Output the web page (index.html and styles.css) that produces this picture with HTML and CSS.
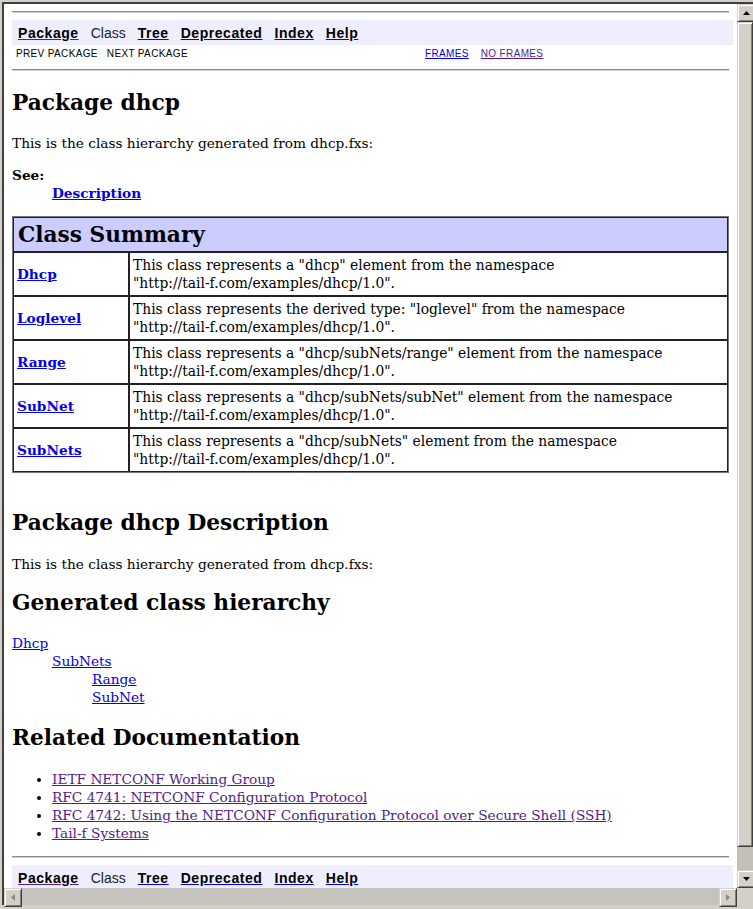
FILE: index.html
```html
<!DOCTYPE html>
<html lang="en">
<head>
    <meta charset="UTF-8">
    <title>dhcp</title>
    <link rel="stylesheet" href="styles.css">
</head>
<body>
<div class="window">
<div class="frame">
    <div class="viewport">
        <div class="page">
            <hr class="rule">
            <div class="navbar">
                <a class="nav-link visited" href="#">Package</a>
                <span class="nav-plain">Class</span>
                <a class="nav-link" href="#">Tree</a>
                <a class="nav-link" href="#">Deprecated</a>
                <a class="nav-link" href="#">Index</a>
                <a class="nav-link" href="#">Help</a>
            </div>
            <div class="subnav">
                <div class="subnav-left">
                    <span>PREV PACKAGE</span>
                    <span>NEXT PACKAGE</span>
                </div>
                <div class="subnav-right">
                    <a href="#">FRAMES</a>
                    <a class="visited" href="#">NO FRAMES</a>
                </div>
            </div>
            <hr class="rule">

            <h1 class="title">Package dhcp</h1>
            <p class="intro">This is the class hierarchy generated from dhcp.fxs:</p>
            <dl class="see">
                <dt>See:</dt>
                <dd><a href="#">Description</a></dd>
            </dl>

            <table class="summary">
                <tr>
                    <th colspan="2">Class Summary</th>
                </tr>
                <tr>
                    <td class="name"><a href="#">Dhcp</a></td>
                    <td>This class represents a "dhcp" element from the namespace<br>"http://tail-f.com/examples/dhcp/1.0".</td>
                </tr>
                <tr>
                    <td class="name"><a href="#">Loglevel</a></td>
                    <td>This class represents the derived type: "loglevel" from the namespace<br>"http://tail-f.com/examples/dhcp/1.0".</td>
                </tr>
                <tr>
                    <td class="name"><a href="#">Range</a></td>
                    <td>This class represents a "dhcp/subNets/range" element from the namespace<br>"http://tail-f.com/examples/dhcp/1.0".</td>
                </tr>
                <tr>
                    <td class="name"><a href="#">SubNet</a></td>
                    <td>This class represents a "dhcp/subNets/subNet" element from the namespace<br>"http://tail-f.com/examples/dhcp/1.0".</td>
                </tr>
                <tr>
                    <td class="name"><a href="#">SubNets</a></td>
                    <td>This class represents a "dhcp/subNets" element from the namespace<br>"http://tail-f.com/examples/dhcp/1.0".</td>
                </tr>
            </table>

            <h2 class="section first">Package dhcp Description</h2>
            <p class="desc">This is the class hierarchy generated from dhcp.fxs:</p>

            <h2 class="section gen">Generated class hierarchy</h2>
            <div class="tree">
                <div><a href="#">Dhcp</a></div>
                <div class="lvl1"><a href="#">SubNets</a></div>
                <div class="lvl2"><a href="#">Range</a></div>
                <div class="lvl2"><a href="#">SubNet</a></div>
            </div>

            <h2 class="section">Related Documentation</h2>
            <ul class="related">
                <li><a class="visited" href="#">IETF NETCONF Working Group</a></li>
                <li><a class="visited" href="#">RFC 4741: NETCONF Configuration Protocol</a></li>
                <li><a class="visited" href="#">RFC 4742: Using the NETCONF Configuration Protocol over Secure Shell (SSH)</a></li>
                <li><a class="visited" href="#">Tail-f Systems</a></li>
            </ul>

            <hr class="rule bottom-rule">
            <div class="navbar">
                <a class="nav-link visited" href="#">Package</a>
                <span class="nav-plain">Class</span>
                <a class="nav-link" href="#">Tree</a>
                <a class="nav-link" href="#">Deprecated</a>
                <a class="nav-link" href="#">Index</a>
                <a class="nav-link" href="#">Help</a>
            </div>
        </div>
    </div>

    <div class="vscroll">
        <div class="sb-btn"><svg width="7" height="4" viewBox="0 0 7 4"><polygon points="0,4 3.5,0 7,4" fill="#000"/></svg></div>
        <div class="sb-thumb"></div>
        <div class="sb-track"></div>
        <div class="sb-btn"><svg width="7" height="4" viewBox="0 0 7 4"><polygon points="0,0 7,0 3.5,4" fill="#000"/></svg></div>
    </div>
    <div class="hscroll">
        <div class="sb-btn"><svg width="4" height="7" viewBox="0 0 4 7"><polygon points="4,0 4,7 0,3.5" fill="#8a8a8a"/></svg></div>
        <div class="sb-track"></div>
        <div class="sb-btn"><svg width="4" height="7" viewBox="0 0 4 7"><polygon points="0,0 4,3.5 0,7" fill="#8a8a8a"/></svg></div>
    </div>
    <div class="corner"></div>
</div>
</div>
</body>
</html>
```

FILE: styles.css
```css
body {
    margin: 0;
    background: #d4d0c8;
}

.window {
    width: 753px;
    height: 909px;
    padding: 2px 0 0 2px;
    background: #d4d0c8;
}

.frame {
    display: grid;
    grid-template-columns: 733px 16px;
    grid-template-rows: 884px 17px;
    border-top: 2px solid #404040;
    border-left: 2px solid #404040;
}

.viewport {
    background: #fff;
    overflow: hidden;
}

.page {
    padding: 7px 8px 0;
    font-family: "DejaVu Serif", serif;
    font-size: 13.7px;
    line-height: 18px;
    color: #000;
}

a {
    color: #0000ee;
}

a.visited {
    color: #551a8b;
}

hr.rule {
    margin: 0;
    height: 0;
    border: 0;
    border-top: 1px solid #8a8a8a;
    border-bottom: 1px solid #d0d0d0;
}

/* nav bars */
.navbar {
    margin-top: 7px;
    width: 715px;
    height: 25px;
    background: #eeeeff;
    display: flex;
    align-items: center;
    gap: 12px;
    padding-left: 6px;
    font: bold 14px/18px "Liberation Sans", Arial, sans-serif;
    letter-spacing: 0.55px;
}

.nav-link {
    color: #000;
    text-decoration-color: #0000ee;
}

.nav-link.visited {
    color: #000;
    text-decoration-color: #551a8b;
}

.nav-plain {
    font-weight: normal;
    color: #222;
    letter-spacing: 0;
}

.subnav {
    display: flex;
    height: 21px;
    padding-top: 3px;
    font: 10px/12px "Liberation Sans", Arial, sans-serif;
    letter-spacing: 0.35px;
}

.subnav-left {
    width: 409px;
    padding-left: 4px;
    display: flex;
    gap: 9px;
}

.subnav-right {
    display: flex;
    gap: 12px;
}

/* headings and text */
.title,
.section {
    font-size: 21.7px;
    line-height: 26px;
    font-weight: bold;
    margin: 19px 0 0;
}

.intro,
.desc {
    margin: 18px 0 0;
}

.desc {
    margin-top: 19px;
}

.see {
    margin: 14px 0 0;
}

.see dt {
    font-weight: bold;
}

.see dd {
    margin-left: 40px;
    font-weight: bold;
}

/* summary table */
.summary {
    margin-top: 14px;
    width: 100%;
    border-collapse: separate;
    border-spacing: 0;
    border: 1px solid #777;
}

.summary th {
    background: #ccccff;
    text-align: left;
    font-size: 21.7px;
    line-height: 26px;
    padding: 4px 4px 3px;
    border: 1px solid #222;
}

.summary td {
    padding: 3px;
    border: 1px solid #222;
    vertical-align: middle;
    font-size: 13.85px;
}

.summary td.name {
    width: 108px;
    font-weight: bold;
    font-size: 13.7px;
}

.section.first {
    margin-top: 37px;
}

.section.gen {
    margin-top: 17px;
}

.tree {
    margin-top: 18px;
}

.tree .lvl1 {
    padding-left: 40px;
}

.tree .lvl2 {
    padding-left: 80px;
}

.related {
    margin: 19px 0 0;
    padding-left: 40px;
}

.bottom-rule {
    margin-top: 14px !important;
}

/* scrollbars */
.vscroll {
    display: flex;
    flex-direction: column;
    background: #c2bfb8;
}

.hscroll {
    display: flex;
    background: #c5c3bd;
}

.sb-track {
    flex: 1;
}

.sb-btn,
.sb-thumb {
    background: #d4d0c8;
    border: 1px solid;
    border-color: #d4d0c8 #404040 #404040 #d4d0c8;
    box-shadow: inset 1px 1px #fff, inset -1px -1px #808080;
}

.sb-btn {
    width: 16px;
    height: 16px;
    flex: none;
    display: flex;
    align-items: center;
    justify-content: center;
}

.hscroll .sb-btn {
    height: 17px;
}

.sb-thumb {
    height: 823px;
}

.corner {
    background: #d4d0c8;
}
```
